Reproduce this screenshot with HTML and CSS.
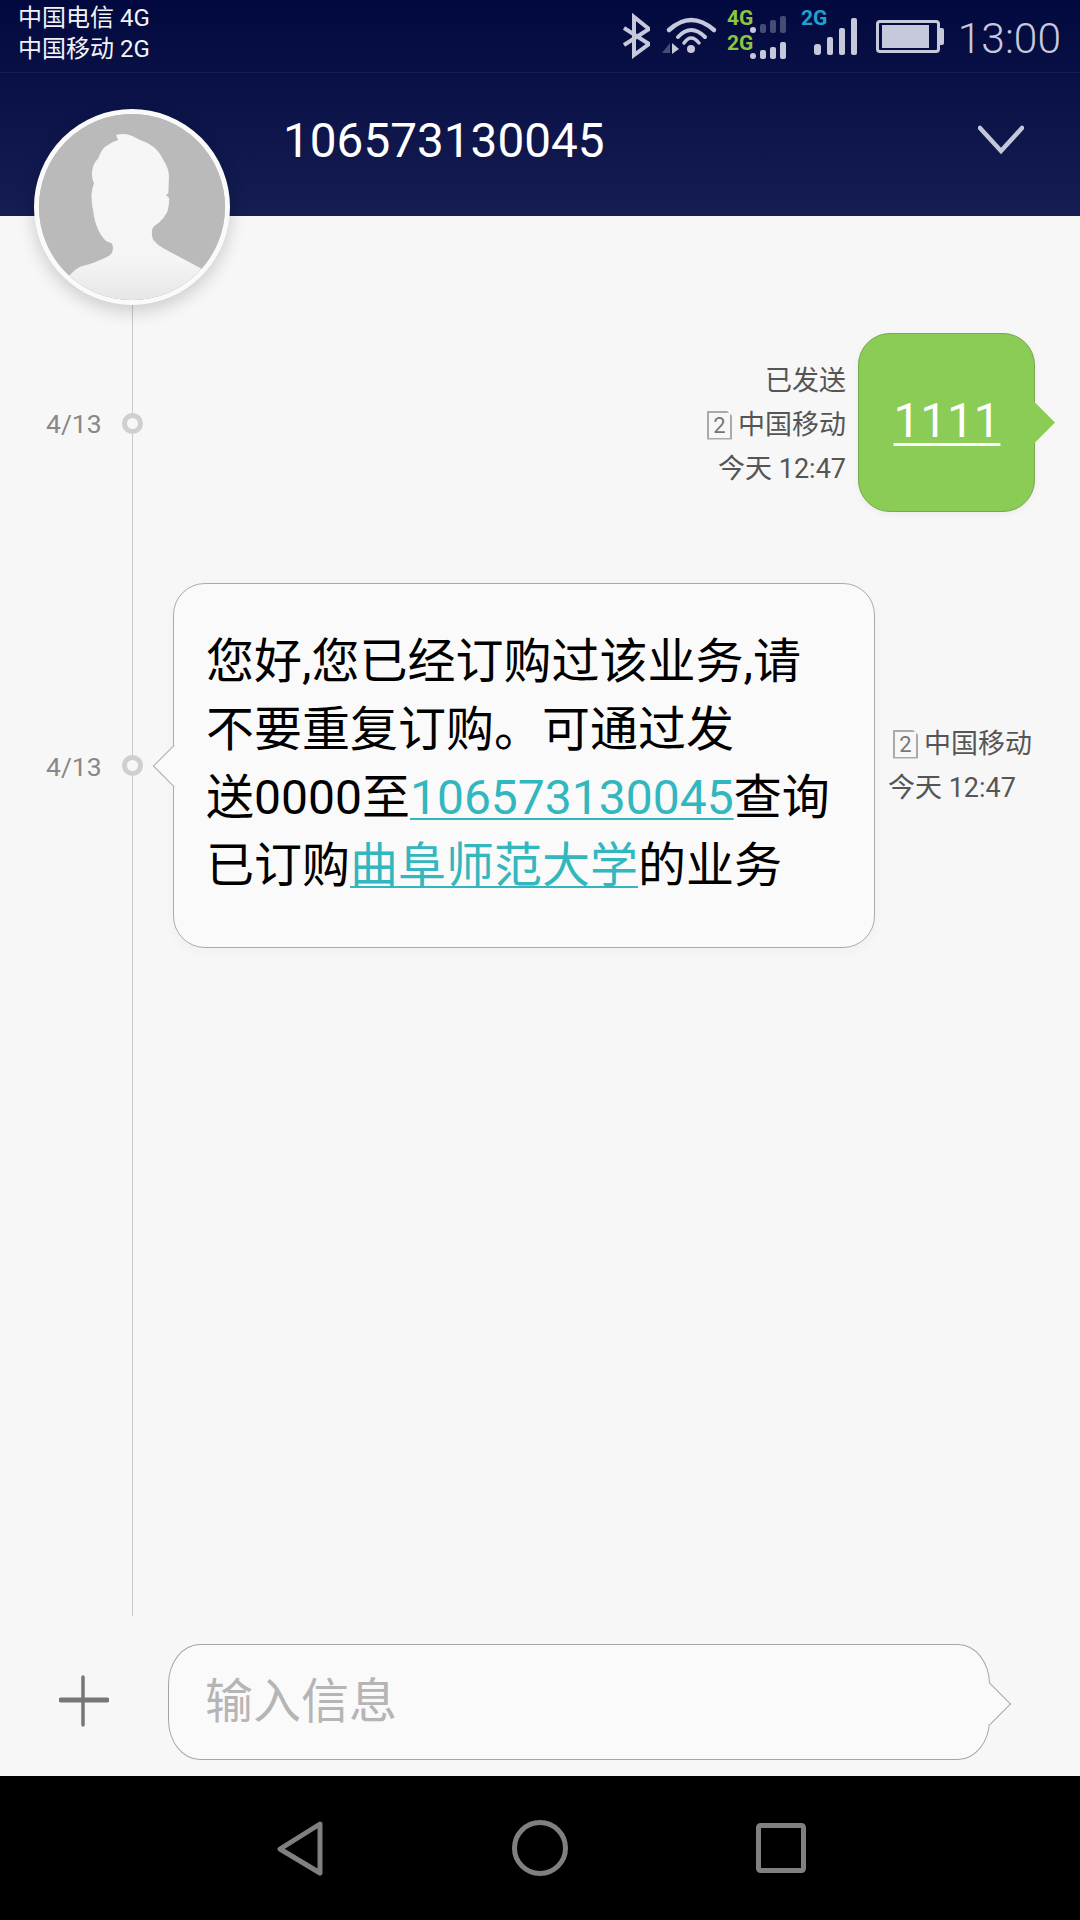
FILE: index.html
```html
<!DOCTYPE html>
<html lang="zh-CN">
<head>
<meta charset="utf-8">
<title>106573130045</title>
<link rel="stylesheet" href="styles.css">
</head>
<body>
<div class="screen">
  <header class="top">
    <div class="statusbar">
      <div class="carriers">
        <div>中国电信 4G</div>
        <div>中国移动 2G</div>
      </div>
      <div class="status-icons">
        <svg class="ic ic-bt" width="27" height="72" viewBox="0 0 27 72"><path d="M1 28 L26 44 L11 55 L11 17 L26 29 L1 45" fill="none" stroke="#c6c9dc" stroke-width="4"/></svg>
        <svg class="ic ic-wifi" width="57" height="72" viewBox="0 0 57 72"><path d="M8 30 Q30 10 53 30" fill="none" stroke="#c6c9dc" stroke-width="4.5" stroke-linecap="round"/><path d="M17 37 Q30 23 44 37" fill="none" stroke="#c6c9dc" stroke-width="4" stroke-linecap="round"/><path d="M23 43 Q30 33 38 43" fill="none" stroke="#c6c9dc" stroke-width="3.5" stroke-linecap="round"/><circle cx="30" cy="49" r="4" fill="#c6c9dc"/><path d="M9 43 V53 H1Z" fill="#474c74"/><path d="M11 43 L18 49 L11 54Z" fill="#c6c9dc"/></svg>
        <svg class="ic ic-sim1" width="60" height="72" viewBox="0 0 60 72">
          <text class="net net-green" x="0" y="25">4G</text>
          <text class="net net-green" x="0" y="50">2G</text>
          <rect x="23" y="27" width="6" height="6" rx="3" fill="#c6c9dc"/>
          <g fill="#474c74"><rect x="33" y="24" width="6" height="9" rx="2"/><rect x="43" y="20" width="6" height="13" rx="2"/><rect x="53" y="16" width="6" height="17" rx="2"/></g>
          <g fill="#c6c9dc"><rect x="23" y="53" width="6" height="6" rx="3"/><rect x="33" y="50" width="6" height="9" rx="2"/><rect x="43" y="47" width="6" height="12" rx="2"/><rect x="53" y="42" width="6" height="17" rx="2"/></g>
        </svg>
        <svg class="ic ic-sim2" width="58" height="72" viewBox="0 0 58 72">
          <text class="net net-blue" x="1" y="25">2G</text>
          <g fill="#c6c9dc"><rect x="14" y="44" width="7" height="11" rx="3"/><rect x="27" y="37" width="6" height="18" rx="2"/><rect x="39" y="28" width="6" height="27" rx="2"/><rect x="51" y="18" width="6" height="37" rx="2"/></g>
        </svg>
        <svg class="ic ic-bat" width="68" height="72" viewBox="0 0 68 72"><rect x="1.5" y="21.5" width="61" height="30" rx="2.5" fill="none" stroke="#c6c9dc" stroke-width="3"/><rect x="6" y="25" width="47" height="23" fill="#c6c9dc"/><path d="M64 28 h2 a2 2 0 0 1 2 2 v13 a2 2 0 0 1 -2 2 h-2z" fill="#c6c9dc"/></svg>
        <span class="clock">13:00</span>
      </div>
    </div>
    <div class="titlebar">
      <span class="contact">106573130045</span>
      <svg class="chevron" width="46" height="30" viewBox="0 0 46 30"><path d="M2 3 L23 26 L44 3" fill="none" stroke="#c4c7d8" stroke-width="4.5" stroke-linecap="round"/></svg>
    </div>
    <div class="avatar">
      <svg class="avatar-art" viewBox="27 27 558 558">
        <defs><linearGradient id="bust" gradientUnits="userSpaceOnUse" x1="0" y1="90" x2="0" y2="590"><stop offset="0" stop-color="#f6f6f6"/><stop offset="0.75" stop-color="#f5f5f5"/><stop offset="1" stop-color="#e6e6e6"/></linearGradient></defs>
        <rect x="0" y="0" width="612" height="612" fill="#bababa"/>
        <path fill="url(#bust)" d="M258 90 Q275 86 290 88 Q310 92 330 105 Q352 112 370 125 Q390 142 400 165 Q415 188 417 210 L415 265 L408 270 L418 280 Q418 300 412 320 Q402 340 385 355 Q366 365 366 378 Q364 392 370 405 Q382 420 400 430 L512 490 L612 612 L0 612 L120 510 Q132 494 150 485 Q185 478 210 465 Q245 452 247 440 Q252 425 245 415 Q230 410 225 405 Q212 392 205 375 Q192 345 190 320 Q183 290 185 265 Q186 250 192 235 Q183 215 187 195 Q190 175 205 160 Q212 138 225 125 Q245 110 265 105Z"/>
      </svg>
    </div>
  </header>

  <main class="thread">
    <div class="timeline-line"></div>
    <section class="msg msg-sent">
      <span class="msg-date">4/13</span>
      <span class="dot"></span>
      <div class="meta meta-sent">
        <div>已发送</div>
        <div class="sim-line"><span class="sim">2</span>中国移动</div>
        <div>今天 12:47</div>
      </div>
      <div class="bubble-green"><a class="green-link">1111</a></div>
    </section>

    <section class="msg msg-recv">
      <span class="msg-date">4/13</span>
      <span class="dot"></span>
      <div class="bubble-white">您好,您已经订购过该业务,请<br>不要重复订购。可通过发<br>送0000至<a class="link">106573130045</a>查询<br>已订购<a class="link">曲阜师范大学</a>的业务</div>
      <div class="meta meta-recv">
        <div class="sim-line"><span class="sim">2</span>中国移动</div>
        <div>今天 12:47</div>
      </div>
    </section>
  </main>

  <div class="composer">
    <svg class="plus" width="50" height="52" viewBox="0 0 50 52"><path d="M24 2 V50" stroke="#777" stroke-width="3.5" stroke-linecap="round"/><path d="M2 25 H48" stroke="#777" stroke-width="5" stroke-linecap="round"/></svg>
    <div class="input">输入信息</div>
  </div>

  <nav class="navbar">
    <svg width="47" height="55" viewBox="0 0 47 55"><path d="M43 3 L3 28 L43 52Z" fill="none" stroke="#808080" stroke-width="5" stroke-linejoin="round"/></svg>
    <svg width="56" height="56" viewBox="0 0 56 56"><circle cx="28" cy="28" r="25.5" fill="none" stroke="#808080" stroke-width="5"/></svg>
    <svg width="50" height="50" viewBox="0 0 50 50"><rect x="2.5" y="2.5" width="45" height="45" rx="2" fill="none" stroke="#808080" stroke-width="5"/></svg>
  </nav>
</div>
</body>
</html>
```
FILE: styles.css
```css
* { box-sizing: border-box; }
html, body { margin: 0; padding: 0; }
body { font-family: Roboto, "Noto Sans CJK SC", sans-serif; background: #f7f7f7; }
.screen { width: 1080px; height: 1920px; display: flex; flex-direction: column; overflow: hidden; position: relative; }

.top { height: 216px; background: linear-gradient(#02093f, #151d52); position: relative; flex: none; }
.statusbar { height: 73px; border-bottom: 1px solid rgba(255,255,255,.05); display: flex; justify-content: space-between; padding: 3px 19px 0 18px; }
.carriers { color: #f2f3f8; font-size: 24px; line-height: 31px; }
.status-icons { display: flex; margin-top: -3px; height: 72px; }
.ic { display: block; flex: none; }
.ic-bt { margin-right: 11px; }
.ic-wifi { margin-right: 9px; }
.ic-sim2 { margin-left: 13px; }
.ic-bat { margin-left: 18px; }
.net { font-family: Roboto, sans-serif; font-weight: 700; font-size: 21px; }
.net-green { fill: #8cc63f; }
.net-blue { fill: #1ea4cc; }
.clock { color: #c6c9dc; font-size: 42.5px; font-weight: 300; line-height: 78px; margin-left: 14px; }

.titlebar { height: 143px; display: flex; align-items: center; justify-content: space-between; padding: 0 56px 0 283px; }
.contact { color: #fff; font-size: 47.7px; line-height: 56px; margin-top: -8px; }
.chevron { margin-top: -10px; }

.avatar { position: absolute; left: 34px; top: 109px; width: 196px; height: 196px; border-radius: 50%; border: 5px solid #fafafa; overflow: hidden; box-shadow: 0 6px 18px rgba(0,0,0,.18); background: #bababa; z-index: 2; }
.avatar-art { display: block; width: 100%; height: 100%; }

.thread { flex: 1; position: relative; padding-top: 117px; }
.timeline-line { position: absolute; left: 132px; top: 0; bottom: 0; width: 1px; background: #c9c9c9; }
.msg { display: flex; align-items: center; position: relative; }
.msg-date { position: absolute; left: 46px; margin-top: 2px; color: #888; font-size: 26.5px; }
.dot { position: absolute; left: 122px; width: 21px; height: 21px; border-radius: 50%; border: 5px solid #cfcfcf; background: #f7f7f7; }
.msg-sent .dot { margin-top: 2px; }

.msg-sent { justify-content: flex-end; padding-right: 45px; gap: 12px; height: 179px; }
.msg-recv { margin-top: 71px; padding-left: 173px; gap: 13px; }

.meta { color: #555; font-size: 27px; line-height: 44px; }
.meta-sent { text-align: right; margin-top: 5px; }
.meta-recv { margin-top: 1px; }
.sim-line { display: flex; align-items: center; justify-content: flex-end; gap: 6px; }
.meta-recv .sim-line { padding-left: 5px; justify-content: flex-start; }
.sim { width: 25px; height: 29px; border: 2px solid #aaa; clip-path: polygon(0 0, 78% 0, 100% 18%, 100% 100%, 0 100%); color: #777; font-size: 22px; line-height: 25px; text-align: center; background: transparent; }

.bubble-green { width: 177px; height: 179px; border-radius: 32px; background: #8bcc56; border: 1px solid #76a84e; position: relative; display: flex; align-items: center; justify-content: center; box-shadow: 0 2px 6px rgba(0,0,0,.05); }
.bubble-green::after { content: ""; position: absolute; right: -15px; top: 74px; width: 29px; height: 29px; background: #8bcc56; transform: rotate(45deg); }
.green-link { color: #fff; font-size: 47.5px; font-weight: 400; line-height: 60px; margin: -4px 0 0 1px; text-decoration: underline; text-decoration-thickness: 3px; text-underline-offset: 6px; }

.bubble-white { width: 702px; height: 365px; padding: 44px 0 0 32px; border-radius: 32px; border: 1px solid #ababab; background: #fafafa; position: relative; color: #000; font-size: 48px; line-height: 68px; white-space: nowrap; box-shadow: 0 4px 14px rgba(0,0,0,.03); }
.bubble-white::before { content: ""; position: absolute; left: -15px; top: 167px; width: 29px; height: 29px; background: #fafafa; border-left: 1px solid #ababab; border-bottom: 1px solid #ababab; transform: rotate(45deg); }
.link { color: #32b7bf; text-decoration: underline; text-decoration-thickness: 2px; text-underline-offset: 4px; }

.composer { height: 160px; flex: none; display: flex; align-items: flex-start; padding: 28px 0 0 59px; gap: 59px; }
.plus { margin-top: 31px; flex: none; }
.input { width: 822px; height: 116px; border-radius: 32px / 40px; border: 1px solid #a5a5a5; background: #fafafa; position: relative; color: #b5b5b5; font-size: 48px; line-height: 114px; padding-left: 36px; }
.input::after { content: ""; position: absolute; right: -16px; top: 44px; width: 29px; height: 29px; background: #fafafa; border-top: 1px solid #a5a5a5; border-right: 1px solid #a5a5a5; transform: rotate(45deg); }

.navbar { height: 144px; flex: none; background: #000; display: flex; align-items: center; padding-left: 277px; gap: 188px; }
```
